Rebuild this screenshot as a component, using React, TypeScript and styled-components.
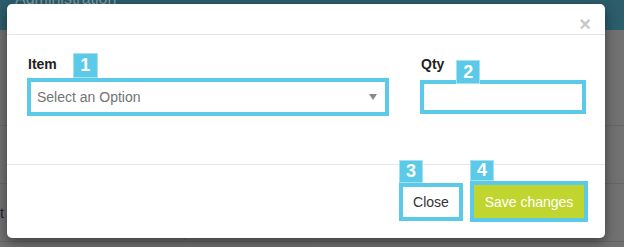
import styled, { createGlobalStyle } from "styled-components";

const GlobalStyle = createGlobalStyle`
  html, body {
    margin: 0;
    padding: 0;
    background: #707070;
  }
  body {
    font-family: "Liberation Sans", Arial, sans-serif;
  }
`;

const cyan = "#5bc9e8";

const Screen = styled.div`
  position: relative;
  width: 624px;
  height: 247px;
  overflow: hidden;
  background: #717171;
`;

/* dimmed page behind the dialog */
const TopBar = styled.div`
  height: 30px;
  background: #2b5d6b;
  padding-left: 15px;
  overflow: hidden;
`;

const BarTitle = styled.div`
  margin-top: -10px;
  font-size: 16px;
  color: #7e9aa2;
`;

const TableRow = styled.div<{ h: number }>`
  height: ${(p) => p.h}px;
  border-bottom: 1px solid #666;
  display: flex;
  align-items: flex-end;
`;

const Cell = styled.div<{ w: number }>`
  width: ${(p) => p.w}px;
  height: 100%;
  border-right: 1px solid #666;
  display: flex;
  align-items: center;
  font-size: 14px;
  color: #1d2233;
`;

const Overlay = styled.div`
  position: absolute;
  top: 4px;
  left: 7px;
  width: 598px;
  height: 234px;
  background: #fff;
  border-radius: 5px;
  box-shadow: 0 4px 12px rgba(0, 0, 0, 0.45);
  display: flex;
  flex-direction: column;
`;

const Header = styled.div`
  height: 30px;
  border-bottom: 1px solid #e5e5e5;
  display: flex;
  justify-content: flex-end;
  align-items: flex-end;
  padding-right: 14px;
`;

const CloseX = styled.span`
  font-size: 20px;
  font-weight: bold;
  line-height: 18px;
  color: #c9c9c9;
  margin-bottom: 1px;
`;

const Body = styled.div`
  height: 111px;
  padding: 18px 12px 0 20px;
  border-bottom: 1px solid #e5e5e5;
  display: flex;
  gap: 31px;
`;

const Field = styled.div<{ w: number }>`
  width: ${(p) => p.w}px;
  flex-shrink: 0;
  display: flex;
  flex-direction: column;
`;

const LabelRow = styled.div`
  display: flex;
  align-items: flex-start;
`;

const Label = styled.label<{ gap: number }>`
  font-size: 14px;
  font-weight: bold;
  color: #222;
  padding: 3px 0 0 1px;
  margin-right: ${(p) => p.gap}px;
`;

const Badge = styled.div<{ w?: number; h?: number; drop?: number }>`
  width: ${(p) => p.w ?? 24}px;
  height: ${(p) => p.h ?? 24}px;
  margin-top: ${(p) => p.drop ?? 0}px;
  box-sizing: border-box;
  background: ${cyan};
  border: 1px solid #a6e0f2;
  color: #fff;
  font-size: 18px;
  font-weight: bold;
  display: flex;
  align-items: center;
  justify-content: center;
  position: relative;
  z-index: 1;
`;

const Select = styled.div`
  height: 38px;
  box-sizing: border-box;
  border: 4px solid ${cyan};
  background: #fff;
  display: flex;
  align-items: center;
  justify-content: space-between;
  padding: 0 8px 0 6px;
  font-size: 14px;
  color: #737373;
`;

const Caret = styled.span`
  width: 0;
  height: 0;
  border-left: 4px solid transparent;
  border-right: 4px solid transparent;
  border-top: 6px solid #888;
`;

const Input = styled.div`
  height: 34px;
  margin-top: -4px;
  box-sizing: border-box;
  border: 4px solid ${cyan};
  background: #fff;
`;

const Footer = styled.div`
  margin-top: -5px;
  padding-right: 17px;
  display: flex;
  justify-content: flex-end;
  align-items: flex-start;
  gap: 7px;
`;

const ButtonStack = styled.div`
  display: flex;
  flex-direction: column;
  align-items: flex-start;
`;

const Button = styled.div<{ primary?: boolean; w: number; h: number }>`
  width: ${(p) => p.w}px;
  height: ${(p) => p.h}px;
  box-sizing: border-box;
  border: 4px solid ${cyan};
  background: ${(p) => (p.primary ? "#c0d62f" : "#fff")};
  color: ${(p) => (p.primary ? "#fff" : "#333")};
  font-size: 14px;
  display: flex;
  align-items: center;
  justify-content: center;
`;

export default function App() {
  return (
    <Screen>
      <GlobalStyle />
      <TopBar>
        <BarTitle>Administration</BarTitle>
      </TopBar>
      <TableRow h={95}>
        <Cell w={184}></Cell>
      </TableRow>
      <TableRow h={57}>
        <Cell w={184}></Cell>
      </TableRow>
      <TableRow h={57}>
        <Cell w={184}>t</Cell>
        <Cell w={129}></Cell>
      </TableRow>

      <Overlay>
        <Header>
          <CloseX>×</CloseX>
        </Header>
        <Body>
          <Field w={362}>
            <LabelRow>
              <Label gap={16}>Item</Label>
              <Badge w={25} h={25}>1</Badge>
            </LabelRow>
            <Select>
              Select an Option
              <Caret />
            </Select>
          </Field>
          <Field w={166}>
            <LabelRow>
              <Label gap={12}>Qty</Label>
              <Badge drop={7}>2</Badge>
            </LabelRow>
            <Input />
          </Field>
        </Body>
        <Footer>
          <ButtonStack>
            <Badge h={23}>3</Badge>
            <Button w={64} h={38}>Close</Button>
          </ButtonStack>
          <ButtonStack>
            <Badge h={21}>4</Badge>
            <Button primary w={118} h={41}>Save changes</Button>
          </ButtonStack>
        </Footer>
      </Overlay>
    </Screen>
  );
}
